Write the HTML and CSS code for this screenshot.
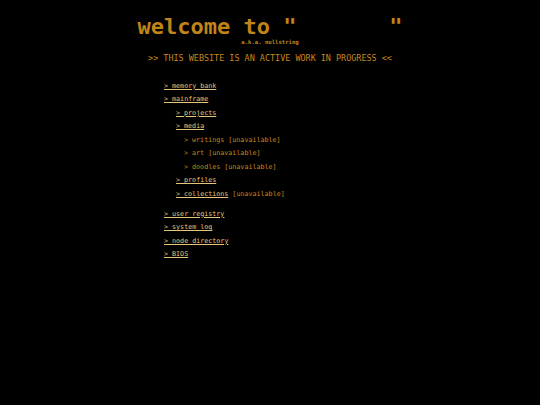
FILE: index.html
```html
<!DOCTYPE html>
<html>
<head>
<meta charset="utf-8">
<link rel="stylesheet" href="styles.css">
</head>
<body>
<header class="head">
  <h1 class="title">welcome to "       "</h1>
  <div class="aka">a.k.a. nullstring</div>
  <p class="notice">&gt;&gt; THIS WEBSITE IS AN ACTIVE WORK IN PROGRESS &lt;&lt;</p>
</header>
<nav class="menu">
  <ul class="group">
    <li><a href="#">&gt; memory bank</a></li>
    <li><a href="#">&gt; mainframe</a>
      <ul class="sub">
        <li><a href="#">&gt; projects</a></li>
        <li><a href="#">&gt; media</a>
          <ul class="sub2">
            <li>&gt; writings [unavailable]</li>
            <li>&gt; art [unavailable]</li>
            <li>&gt; doodles [unavailable]</li>
          </ul>
        </li>
        <li><a href="#">&gt; profiles</a></li>
        <li><a href="#">&gt; collections</a> [unavailable]</li>
      </ul>
    </li>
  </ul>
  <ul class="group second">
    <li><a href="#">&gt; user registry</a></li>
    <li><a href="#">&gt; system log</a></li>
    <li><a href="#">&gt; node directory</a></li>
    <li><a href="#">&gt; BIOS</a></li>
  </ul>
</nav>
</body>
</html>
```
FILE: styles.css
```css
html, body {
  margin: 0;
  padding: 0;
  background: #000;
  color: #c4871c;
  font-family: "DejaVu Sans Mono", monospace;
}
body {
  width: 540px;
  height: 405px;
}
.head {
  display: flex;
  flex-direction: column;
  align-items: center;
  padding-top: 14px;
}
.title {
  margin: 0;
  font-size: 22px;
  line-height: 26px;
  font-weight: bold;
  white-space: pre;
  color: #c08419;
}
.aka {
  font-size: 5.6px;
  line-height: 7px;
  font-weight: bold;
  margin-top: -1.5px;
}
.notice {
  margin: 7px 0 0 0;
  font-size: 8.45px;
  line-height: 10px;
}
.menu {
  padding-left: 164px;
  padding-top: 17px;
  font-size: 6.7px;
}
.group, .sub, .sub2 {
  list-style: none;
  margin: 0;
  padding: 0;
}
.group li {
  line-height: 13.5px;
}
.sub { padding-left: 12px; }
.sub2 { padding-left: 8px; }
.second { margin-top: 6.5px; }
a {
  color: #e8c57c;
  text-decoration: underline;
}
```
